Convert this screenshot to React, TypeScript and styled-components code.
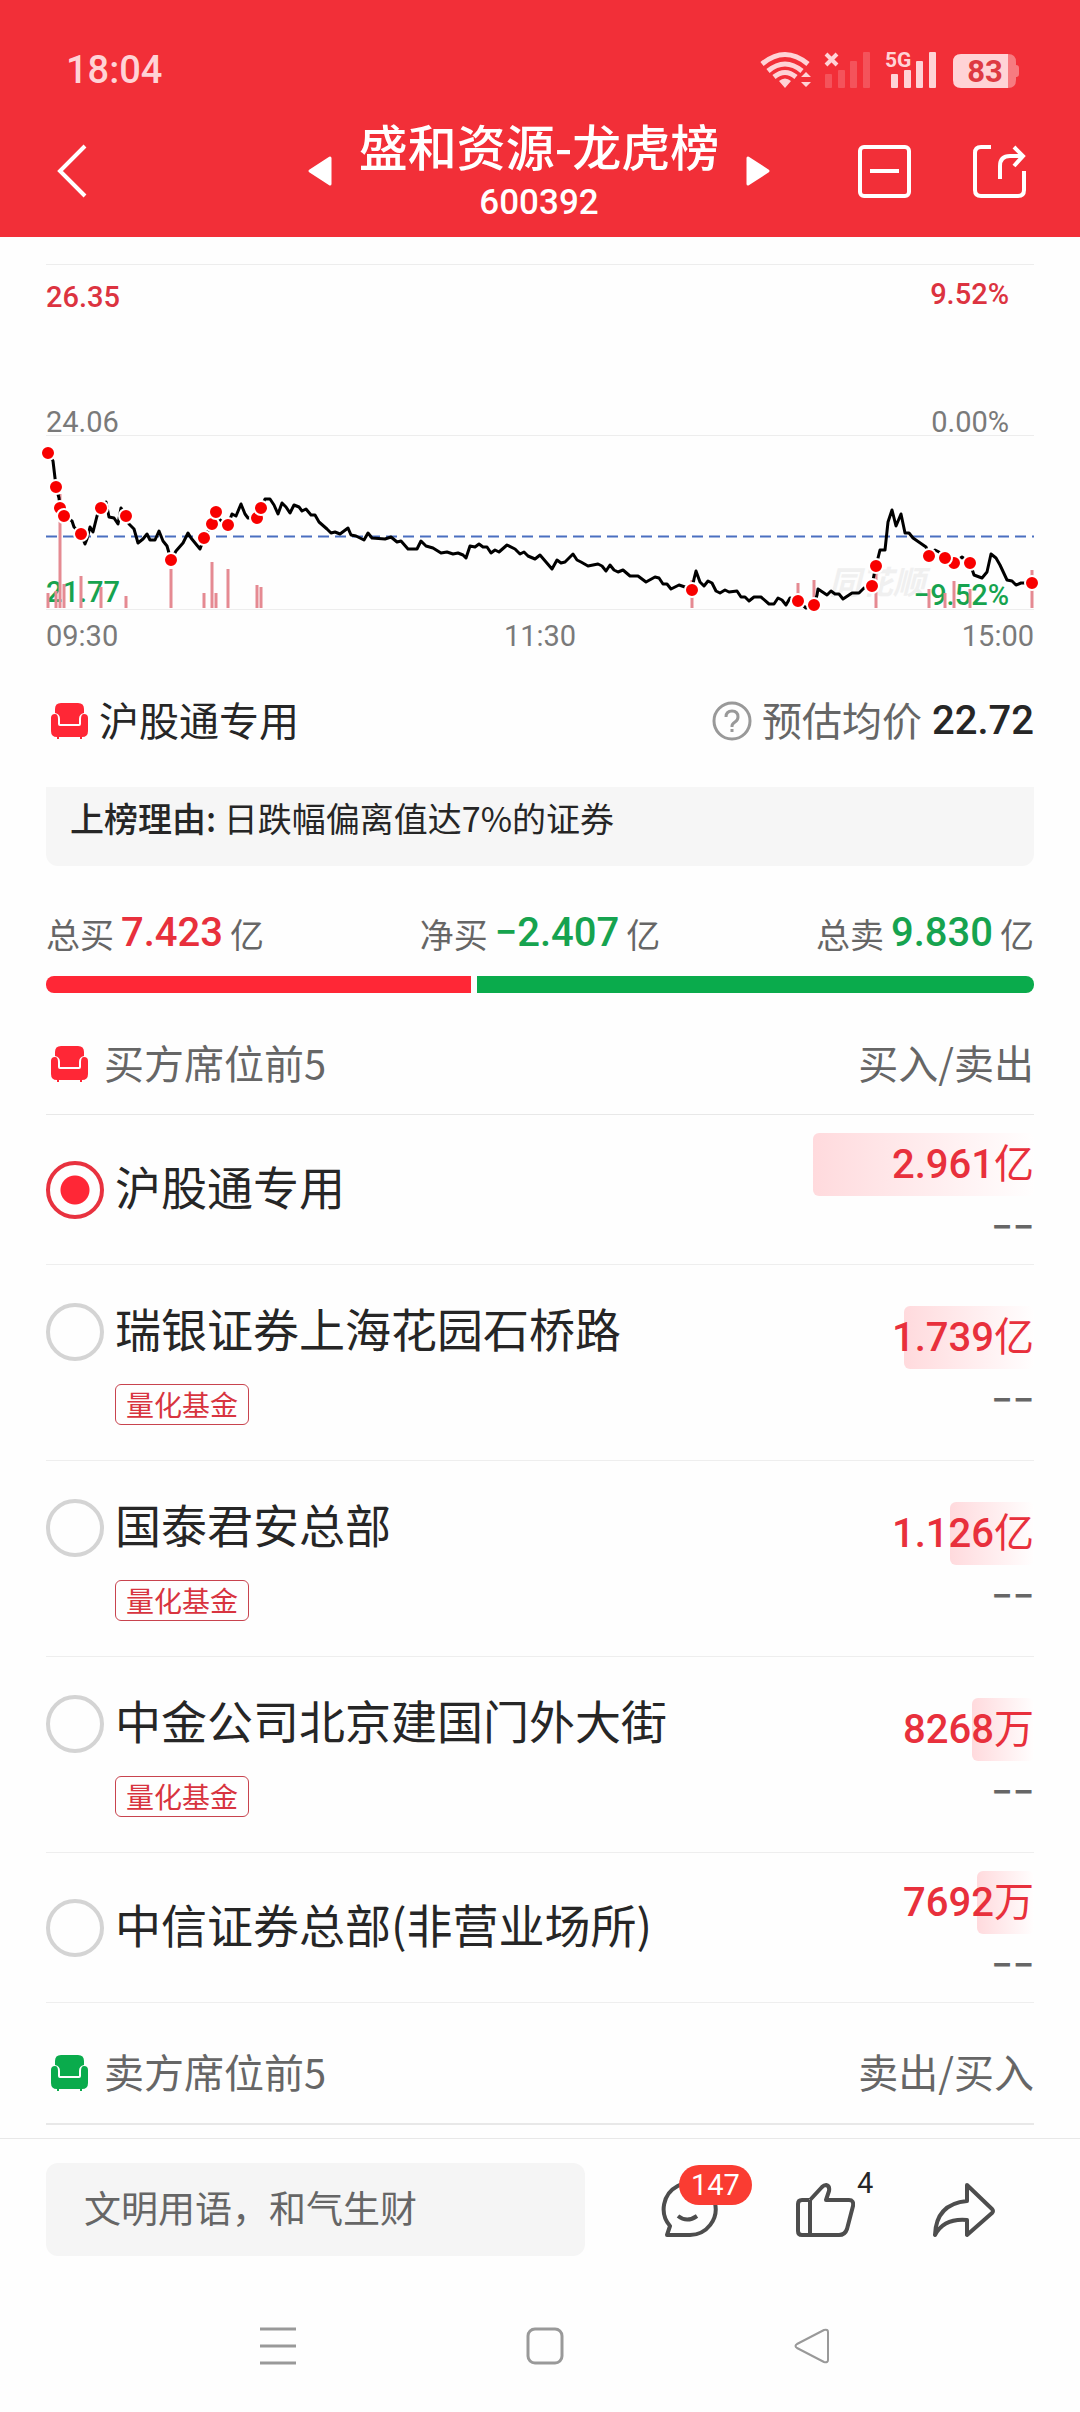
import React, { useState } from "react";
import styled, { createGlobalStyle } from "styled-components";

const cjk = '"Noto Sans CJK SC", sans-serif';
const mixed = 'Roboto, "Noto Sans CJK SC", sans-serif';

const GlobalStyle = createGlobalStyle`
  * { box-sizing: border-box; }
  body { margin: 0; background: #fefefe; color: #262626; font-family: ${cjk}; }
  button { border: 0; padding: 0; margin: 0; background: none; color: inherit; font: inherit; display: flex; cursor: pointer; }
  h1, h2, p { margin: 0; font-weight: 400; }
  svg { display: block; }
`;

const Page = styled.div`
  display: flex;
  flex-direction: column;
  min-height: 100vh;
`;

const Header = styled.header`
  background: #f22f38;
  color: #fff;
`;

const StatusBar = styled.div`
  display: flex;
  align-items: center;
  justify-content: space-between;
  height: 108px;
  padding: 32px 60px 0 66px;
  color: #ffd3d6;
`;

const Clock = styled.time`
  font: 500 38px/44px ${mixed};
`;

const StatusIcons = styled.div`
  display: flex;
  align-items: center;
`;

const NavBar = styled.div`
  display: grid;
  grid-template-columns: 1fr auto 1fr;
  align-items: center;
  height: 129px;
  padding: 0 54px 4px 52px;
`;

const TitleGroup = styled.div`
  display: flex;
  align-items: center;
  gap: 26px;
`;

const Titles = styled.div`
  display: flex;
  flex-direction: column;
  align-items: center;
`;

const Title = styled.h1`
  font: 500 49px/64px ${cjk};
`;

const Code = styled.p`
  font: 500 35px/52px ${mixed};
`;

const HeaderActions = styled.div`
  display: flex;
  justify-content: flex-end;
  gap: 61px;
`;

const Main = styled.main`
  flex: 1;
`;

const ChartSvg = styled.svg`
  width: 100%;
  height: auto;
  font-family: ${mixed};
  font-size: 29px;
`;

const Section = styled.section`
  padding: 0 46px;
`;

const SplitRow = styled.div`
  display: flex;
  align-items: center;
  justify-content: space-between;
`;

const SeatSummary = styled(SplitRow)`
  height: 80px;
  margin-top: 21px;
`;

const WithIcon = styled.div<{ $gap: number }>`
  display: flex;
  align-items: center;
  gap: ${(p) => p.$gap}px;
`;

const Label = styled.span<{ $muted?: boolean }>`
  padding-bottom: 4px;
  color: ${(p) => (p.$muted ? "#666" : "#262626")};
  font-size: 40px;
  line-height: 56px;
`;

const Price = styled.strong`
  font: 500 40px/48px ${mixed};
`;

const Reason = styled.p`
  margin-top: 26px;
  height: 79px;
  padding: 6px 24px;
  border-radius: 0 0 12px 12px;
  background: #f6f6f6;
  font-size: 34px;
  line-height: 50px;
`;

const ReasonLabel = styled.span`
  font-weight: 500;
`;

const Totals = styled(SplitRow)`
  height: 60px;
  margin-top: 37px;
  color: #666;
  font-size: 34px;
`;

const Total = styled.span`
  display: flex;
  align-items: center;
  gap: 7px;
`;

const TotalValue = styled.strong<{ $down?: boolean }>`
  font: 500 40px/48px ${mixed};
  color: ${(p) => (p.$down ? "#16a34f" : "#e8303c")};
`;

const RatioBar = styled.div`
  display: flex;
  gap: 6px;
  height: 17px;
  margin-top: 13px;
  border-radius: 8px;
  overflow: hidden;
`;

const RatioPart = styled.div<{ $color: string }>`
  background: ${(p) => p.$color};
`;

const ListHead = styled(SplitRow)<{ $strong?: boolean }>`
  height: 122px;
  padding-top: 20px;
  border-bottom: ${(p) => (p.$strong ? 2 : 1)}px solid #e8e8e8;
`;

const SeatList = styled.ul`
  list-style: none;
  margin: 0;
  padding: 0;
`;

const SeatItem = styled.li<{ $tall: boolean }>`
  display: flex;
  align-items: center;
  justify-content: space-between;
  height: ${(p) => (p.$tall ? 196 : 150)}px;
  border-bottom: 1px solid #eee;
`;

const SeatLabel = styled.label<{ $tall: boolean }>`
  display: grid;
  grid-template-columns: 58px auto;
  column-gap: 11px;
  row-gap: 23px;
  align-items: center;
  justify-items: start;
  padding-top: ${(p) => (p.$tall ? 2 : 0)}px;
`;

const Radio = styled.input`
  appearance: none;
  width: 58px;
  height: 58px;
  margin: 0;
  border: 4px solid #d4d4d4;
  border-radius: 50%;
  &:checked {
    border-color: #e8323f;
    background: radial-gradient(circle, #ff2736 14px, transparent 15px);
  }
`;

const SeatName = styled.span`
  padding-bottom: 10px;
  font-size: 46px;
  line-height: 48px;
`;

const Tag = styled.span`
  grid-column: 2;
  padding: 0 10px;
  border: 1px solid #c8434e;
  border-radius: 6px;
  color: #d8343f;
  font-size: 28px;
  line-height: 39px;
`;

const Amounts = styled.div`
  width: 221px;
  text-align: right;
`;

const Amount = styled.div`
  display: flex;
  justify-content: flex-end;
  height: 63px;
`;

const AmountBar = styled.div`
  display: flex;
  justify-content: flex-end;
  border-radius: 6px;
  background: linear-gradient(90deg, #ffdadd, #fffefe);
  white-space: nowrap;
  color: #e8303c;
  font: 500 40px/63px ${mixed};
`;

const Unit = styled.span`
  font-weight: 400;
`;

const Opposite = styled.div`
  height: 51px;
  color: #666;
  font: 500 38px/62px ${mixed};
`;

const Footer = styled.footer`
  margin-top: 13px;
  border-top: 1px solid #e8e8e8;
`;

const CommentBar = styled.div`
  display: flex;
  align-items: center;
  justify-content: space-between;
  padding: 24px 84px 0 46px;
`;

const CommentInput = styled.input`
  width: 539px;
  height: 93px;
  padding: 0 38px 6px;
  border: 0;
  border-radius: 12px;
  background: #f5f5f5;
  color: #262626;
  font: 400 37px/50px ${cjk};
  &::placeholder { color: #666; opacity: 1; }
`;

const CommentActions = styled.div`
  display: flex;
  gap: 77px;
`;

const Action = styled.button`
  position: relative;
`;

const Badge = styled.span`
  position: absolute;
  left: 21px;
  top: -17px;
  padding: 0 12px;
  border-radius: 20px;
  background: #fa3c32;
  color: #fff;
  font: 400 29px/40px ${mixed};
`;

const Count = styled.span`
  position: absolute;
  left: calc(100% + 2px);
  top: -17px;
  color: #262626;
  font: 400 29px/36px ${mixed};
`;

const SystemNav = styled.nav`
  display: flex;
  justify-content: space-between;
  padding: 71px 250px 47px 260px;
`;

const PRICE_LINE =
  "48,453 53,461 55,478 56,487 59,498 60,508 64,516 72,521 74,527 81,534 85,544 87,539 90,527 93,532 97,516 101,508 106,502 109,517 114,518 118,524 121,508 126,516 129,524 134,529 138,543 143,539 147,534 150,540 155,540 159,531 163,541 167,546 171,560 176,551 183,543 188,533 191,538 200,549 204,538 212,524 216,512 220,520 228,525 232,514 236,516 241,504 245,514 248,518 257,518 261,508 265,499 270,499 274,505 278,514 282,503 286,507 290,513 294,505 299,507 302,511 306,509 311,515 315,515 319,522 327,529 331,533 335,532 340,534 348,528 351,535 356,536 364,540 368,533 372,538 385,539 391,537 397,542 401,541 408,549 417,549 421,541 426,546 433,548 441,553 447,552 453,554 458,553 463,555 466,558 470,546 475,547 479,544 483,547 487,547 491,553 495,550 499,552 507,545 515,549 520,554 524,552 528,556 535,559 540,555 552,569 557,560 561,563 565,562 573,554 577,560 581,562 588,566 598,564 602,566 606,571 610,565 614,570 618,572 623,570 630,576 638,576 646,582 655,577 659,578 663,584 667,584 671,589 679,585 685,587 692,590 694,579 696,571 700,582 704,586 708,581 712,583 716,591 720,593 725,590 729,592 737,591 741,597 745,597 749,601 754,597 761,597 769,604 774,604 778,598 782,600 786,605 790,598 798,601 806,608 814,605 817,595 818,589 827,595 831,591 835,594 839,594 843,599 852,593 859,593 864,588 872,586 874,575 876,566 880,550 885,550 888,522 891,513 892,510 896,526 901,514 905,533 909,533 913,538 926,547 929,556 935,550 939,552 945,558 954,563 962,557 970,563 974,575 982,578 987,572 991,554 996,558 1000,565 1007,580 1012,581 1016,585 1021,583 1032,583";

const DOTS: [number, number][] = [
  [48, 453], [56, 487], [60, 508], [64, 516], [81, 534], [101, 508], [126, 516], [171, 560],
  [204, 538], [212, 524], [216, 512], [228, 525], [257, 518], [261, 508], [692, 590], [798, 601],
  [814, 605], [872, 586], [876, 566], [929, 556], [954, 563], [945, 558], [970, 563], [1032, 583],
];

const VOLUMES: [number, number][] = [
  [48, 593], [56, 591], [60, 494], [64, 584], [81, 576], [101, 587], [126, 596], [171, 569],
  [204, 593], [212, 562], [216, 593], [228, 569], [257, 585], [261, 587], [692, 580], [798, 583],
  [814, 580], [876, 570], [929, 589], [945, 593], [954, 581], [970, 589], [1032, 570],
];

const Chart = () => (
  <ChartSvg viewBox="0 237 1080 423" role="img" aria-label="分时走势">
    <g stroke="#ededed" strokeWidth="1">
      <path d="M46 264.5H1034M46 435.5H1034M46 609.5H1034" />
    </g>
    <text x="829" y="594" fontSize="32" fontWeight="700" fontStyle="italic" fill="#f0f0f0">同花顺</text>
    <text x="46" y="602" fill="#16a34f" fontWeight="500">21.77</text>
    <text x="1009" y="605" fill="#16a34f" fontWeight="500" textAnchor="end">−9.52%</text>
    <path d="M46 536.5H1034" stroke="#4a6fc0" strokeWidth="2" strokeDasharray="11 6" />
    <g stroke="#e58a92" strokeWidth="3">
      {VOLUMES.map(([x, y]) => <path key={x} d={`M${x} ${y}V608`} />)}
    </g>
    <polyline points={PRICE_LINE} fill="none" stroke="#000" strokeWidth="3" strokeLinejoin="round" />
    {DOTS.map(([x, y]) => (
      <circle key={x} cx={x} cy={y} r="7" fill="#f80000" stroke="#fff" strokeWidth="2" />
    ))}
    <text x="46" y="307" fill="#dc3340" fontWeight="500">26.35</text>
    <text x="1009" y="304" fill="#dc3340" fontWeight="500" textAnchor="end">9.52%</text>
    <g fill="#7a7a7a">
      <text x="46" y="432">24.06</text>
      <text x="1009" y="432" textAnchor="end">0.00%</text>
      <text x="46" y="646">09:30</text>
      <text x="540" y="646" textAnchor="middle">11:30</text>
      <text x="1034" y="646" textAnchor="end">15:00</text>
    </g>
  </ChartSvg>
);

const Sofa = ({ color }: { color: string }) => (
  <svg width="46" height="36" viewBox="0 0 46 36" fill={color}>
    <path d="M15 0h17q6 0 6 6v4q-5 1-5 6v5H14v-5q0-5-5-6V6q0-6 6-6z" />
    <path d="M5 15q0-4 4-4 3 0 3 5v5q0 2 2 2h19q2 0 2-2v-5q0-5 3-5 4 0 4 4v13q0 6-6 6v2h-2v-2H13v2h-2v-2q-6 0-6-6z" />
  </svg>
);

const Signal = ({ faded }: { faded?: boolean }) => (
  <g fill="#ffd3d6" opacity={faded ? 0.22 : 1}>
    <rect x="0" y="23" width="7" height="14" rx="1" />
    <rect x="13" y="19" width="7" height="18" rx="1" />
    <rect x="25" y="10" width="7" height="27" rx="1" />
    <rect x="38" y="1" width="7" height="36" rx="1" />
  </g>
);

const StatusGlyphs = () => (
  <svg width="262" height="42" viewBox="758 49 262 42" fill="none">
    <g stroke="#ffd3d6" strokeWidth="5">
      <path d="M762 64q23-19 46 0M768 71q17-14 34 0M774 77q11-9 22 0" />
    </g>
    <path d="M785 88l-6-7q6-5 12 0zM801 77l5-5 5 5zM801 82l5 5 5-5z" fill="#ffd3d6" />
    <path d="M826 54l11 11M837 54l-11 11" stroke="#ffd3d6" strokeWidth="4" />
    <g transform="translate(825 51)"><Signal faded /></g>
    <text x="885" y="67" fontSize="21" fontWeight="700" fontFamily="Roboto, sans-serif" fill="#ffd3d6">5G</text>
    <g transform="translate(891 51)"><Signal /></g>
    <path d="M1008 54q8 0 8 8v3q3 0 3 3v6q0 3-3 3v3q0 8-8 8z" fill="#f77b80" />
    <path d="M961 54h47v34h-47q-8 0-8-8V62q0-8 8-8z" fill="#ffd3d6" />
    <text x="985" y="82" fontSize="31" fontWeight="700" fontFamily="Roboto, sans-serif" fill="#de3a42" textAnchor="middle">83</text>
  </svg>
);

const Help = () => (
  <svg width="40" height="40" viewBox="0 0 40 40" fill="none" stroke="#999" strokeWidth="3">
    <circle cx="20" cy="20" r="18" />
    <path d="M14 16q0-6 6-6t6 6q0 3-3 5t-3 4v1" />
    <path d="M20 28v3" />
  </svg>
);

type Seat = { name: string; tag?: string; amount: string; unit: string; bar: number };

const SEATS: Seat[] = [
  { name: "沪股通专用", amount: "2.961", unit: "亿", bar: 221 },
  { name: "瑞银证券上海花园石桥路", tag: "量化基金", amount: "1.739", unit: "亿", bar: 130 },
  { name: "国泰君安总部", tag: "量化基金", amount: "1.126", unit: "亿", bar: 84 },
  { name: "中金公司北京建国门外大街", tag: "量化基金", amount: "8268", unit: "万", bar: 62 },
  { name: "中信证券总部(非营业场所)", amount: "7692", unit: "万", bar: 57 },
];

export default function App() {
  const [selected, setSelected] = useState(0);
  return (
    <Page>
      <GlobalStyle />
      <Header>
        <StatusBar>
          <Clock>18:04</Clock>
          <StatusIcons><StatusGlyphs /></StatusIcons>
        </StatusBar>
        <NavBar>
          <button aria-label="返回">
            <svg width="40" height="56" viewBox="0 0 40 56" fill="none" stroke="#fff" strokeWidth="4">
              <path d="M33 3L8 28l25 25" />
            </svg>
          </button>
          <TitleGroup>
            <button aria-label="上一只">
              <svg width="26" height="30" viewBox="0 0 26 30" fill="#fff" stroke="#fff" strokeWidth="3" strokeLinejoin="round">
                <path d="M23 2v26L3 15z" />
              </svg>
            </button>
            <Titles>
              <Title>盛和资源-龙虎榜</Title>
              <Code>600392</Code>
            </Titles>
            <button aria-label="下一只">
              <svg width="26" height="30" viewBox="0 0 26 30" fill="#fff" stroke="#fff" strokeWidth="3" strokeLinejoin="round">
                <path d="M3 2v26l20-13z" />
              </svg>
            </button>
          </TitleGroup>
          <HeaderActions>
            <button aria-label="移除自选">
              <svg width="54" height="54" viewBox="0 0 54 54" fill="none" stroke="#fff" strokeWidth="4">
                <rect x="3" y="3" width="49" height="49" rx="4" />
                <path d="M13 27h29" />
              </svg>
            </button>
            <button aria-label="分享页面">
              <svg width="54" height="54" viewBox="0 0 54 54" fill="none" stroke="#fff" strokeWidth="4">
                <path d="M19 3H9q-6 0-6 6v37q0 6 6 6h37q6 0 6-6V27" />
                <path d="M28 35V22q0-10 10-10h13M42 3l9 9-9 10" />
              </svg>
            </button>
          </HeaderActions>
        </NavBar>
      </Header>

      <Main>
        <Chart />
        <Section>
          <SeatSummary>
            <WithIcon $gap={7}>
              <Sofa color="#ff2736" />
              <Label>沪股通专用</Label>
            </WithIcon>
            <WithIcon $gap={10}>
              <Help />
              <Label $muted>预估均价</Label>
              <Price>22.72</Price>
            </WithIcon>
          </SeatSummary>
          <Reason>
            <ReasonLabel>上榜理由:</ReasonLabel> 日跌幅偏离值达7%的证券
          </Reason>
          <Totals>
            <Total>总买<TotalValue>7.423</TotalValue>亿</Total>
            <Total>净买<TotalValue $down>−2.407</TotalValue>亿</Total>
            <Total>总卖<TotalValue $down>9.830</TotalValue>亿</Total>
          </Totals>
          <RatioBar>
            <RatioPart $color="#ff2736" style={{ flexGrow: 7.46 }} />
            <RatioPart $color="#0aab4c" style={{ flexGrow: 9.79 }} />
          </RatioBar>
          <ListHead>
            <WithIcon $gap={12}>
              <Sofa color="#ff2736" />
              <Label as="h2" $muted>买方席位前5</Label>
            </WithIcon>
            <Label $muted>买入/卖出</Label>
          </ListHead>
          <SeatList>
            {SEATS.map((seat, i) => (
              <SeatItem key={seat.name} $tall={Boolean(seat.tag)}>
                <SeatLabel $tall={Boolean(seat.tag)}>
                  <Radio type="radio" name="seat" checked={selected === i} onChange={() => setSelected(i)} />
                  <SeatName>{seat.name}</SeatName>
                  {seat.tag && <Tag>{seat.tag}</Tag>}
                </SeatLabel>
                <Amounts>
                  <Amount>
                    <AmountBar style={{ width: seat.bar }}>
                      <span>{seat.amount}<Unit>{seat.unit}</Unit></span>
                    </AmountBar>
                  </Amount>
                  <Opposite>−−</Opposite>
                </Amounts>
              </SeatItem>
            ))}
          </SeatList>
          <ListHead $strong>
            <WithIcon $gap={12}>
              <Sofa color="#0aab4c" />
              <Label as="h2" $muted>卖方席位前5</Label>
            </WithIcon>
            <Label $muted>卖出/买入</Label>
          </ListHead>
        </Section>
      </Main>

      <Footer>
        <CommentBar>
          <CommentInput aria-label="评论" placeholder="文明用语，和气生财" />
          <CommentActions>
            <Action aria-label="评论 147">
              <svg width="60" height="56" viewBox="0 0 60 56" fill="none" stroke="#4d4d4d" strokeWidth="4" strokeLinejoin="round">
                <path d="M12 44A26 26 0 1 1 32 53H9z" />
                <path d="M20 34q9 7 19 0" />
              </svg>
              <Badge>147</Badge>
            </Action>
            <Action aria-label="点赞 4">
              <svg width="60" height="56" viewBox="0 0 60 56" fill="none" stroke="#4d4d4d" strokeWidth="4" strokeLinejoin="round">
                <path d="M14 18h-7q-4 0-4 4v27q0 4 4 4h37q6 0 8-6l6-23q1-6-4-6H31l3-9q1-5-3-6-2 0-4 2L15 18" />
                <path d="M15 18v35" />
              </svg>
              <Count>4</Count>
            </Action>
            <Action aria-label="转发">
              <svg width="64" height="56" viewBox="0 0 64 56" fill="none" stroke="#4d4d4d" strokeWidth="4" strokeLinejoin="round">
                <path d="M35 3l25 24q2 2 0 4L35 53V38Q12 36 3 53 4 22 35 19z" />
              </svg>
            </Action>
          </CommentActions>
        </CommentBar>
        <SystemNav>
          <button aria-label="最近任务">
            <svg width="36" height="38" viewBox="0 0 36 38" stroke="#999" strokeWidth="3"><path d="M0 2h36M0 19h36M0 36h36" /></svg>
          </button>
          <button aria-label="主屏幕">
            <svg width="38" height="38" viewBox="0 0 38 38" fill="none" stroke="#999" strokeWidth="3"><rect x="2" y="2" width="34" height="34" rx="7" /></svg>
          </button>
          <button aria-label="系统返回">
            <svg width="36" height="38" viewBox="0 0 36 38" fill="none" stroke="#999" strokeWidth="2" strokeLinejoin="round"><path d="M30 3q4-1 4 2v28q0 3-4 2L3 21q-3-2 0-4z" /></svg>
          </button>
        </SystemNav>
      </Footer>
    </Page>
  );
}
